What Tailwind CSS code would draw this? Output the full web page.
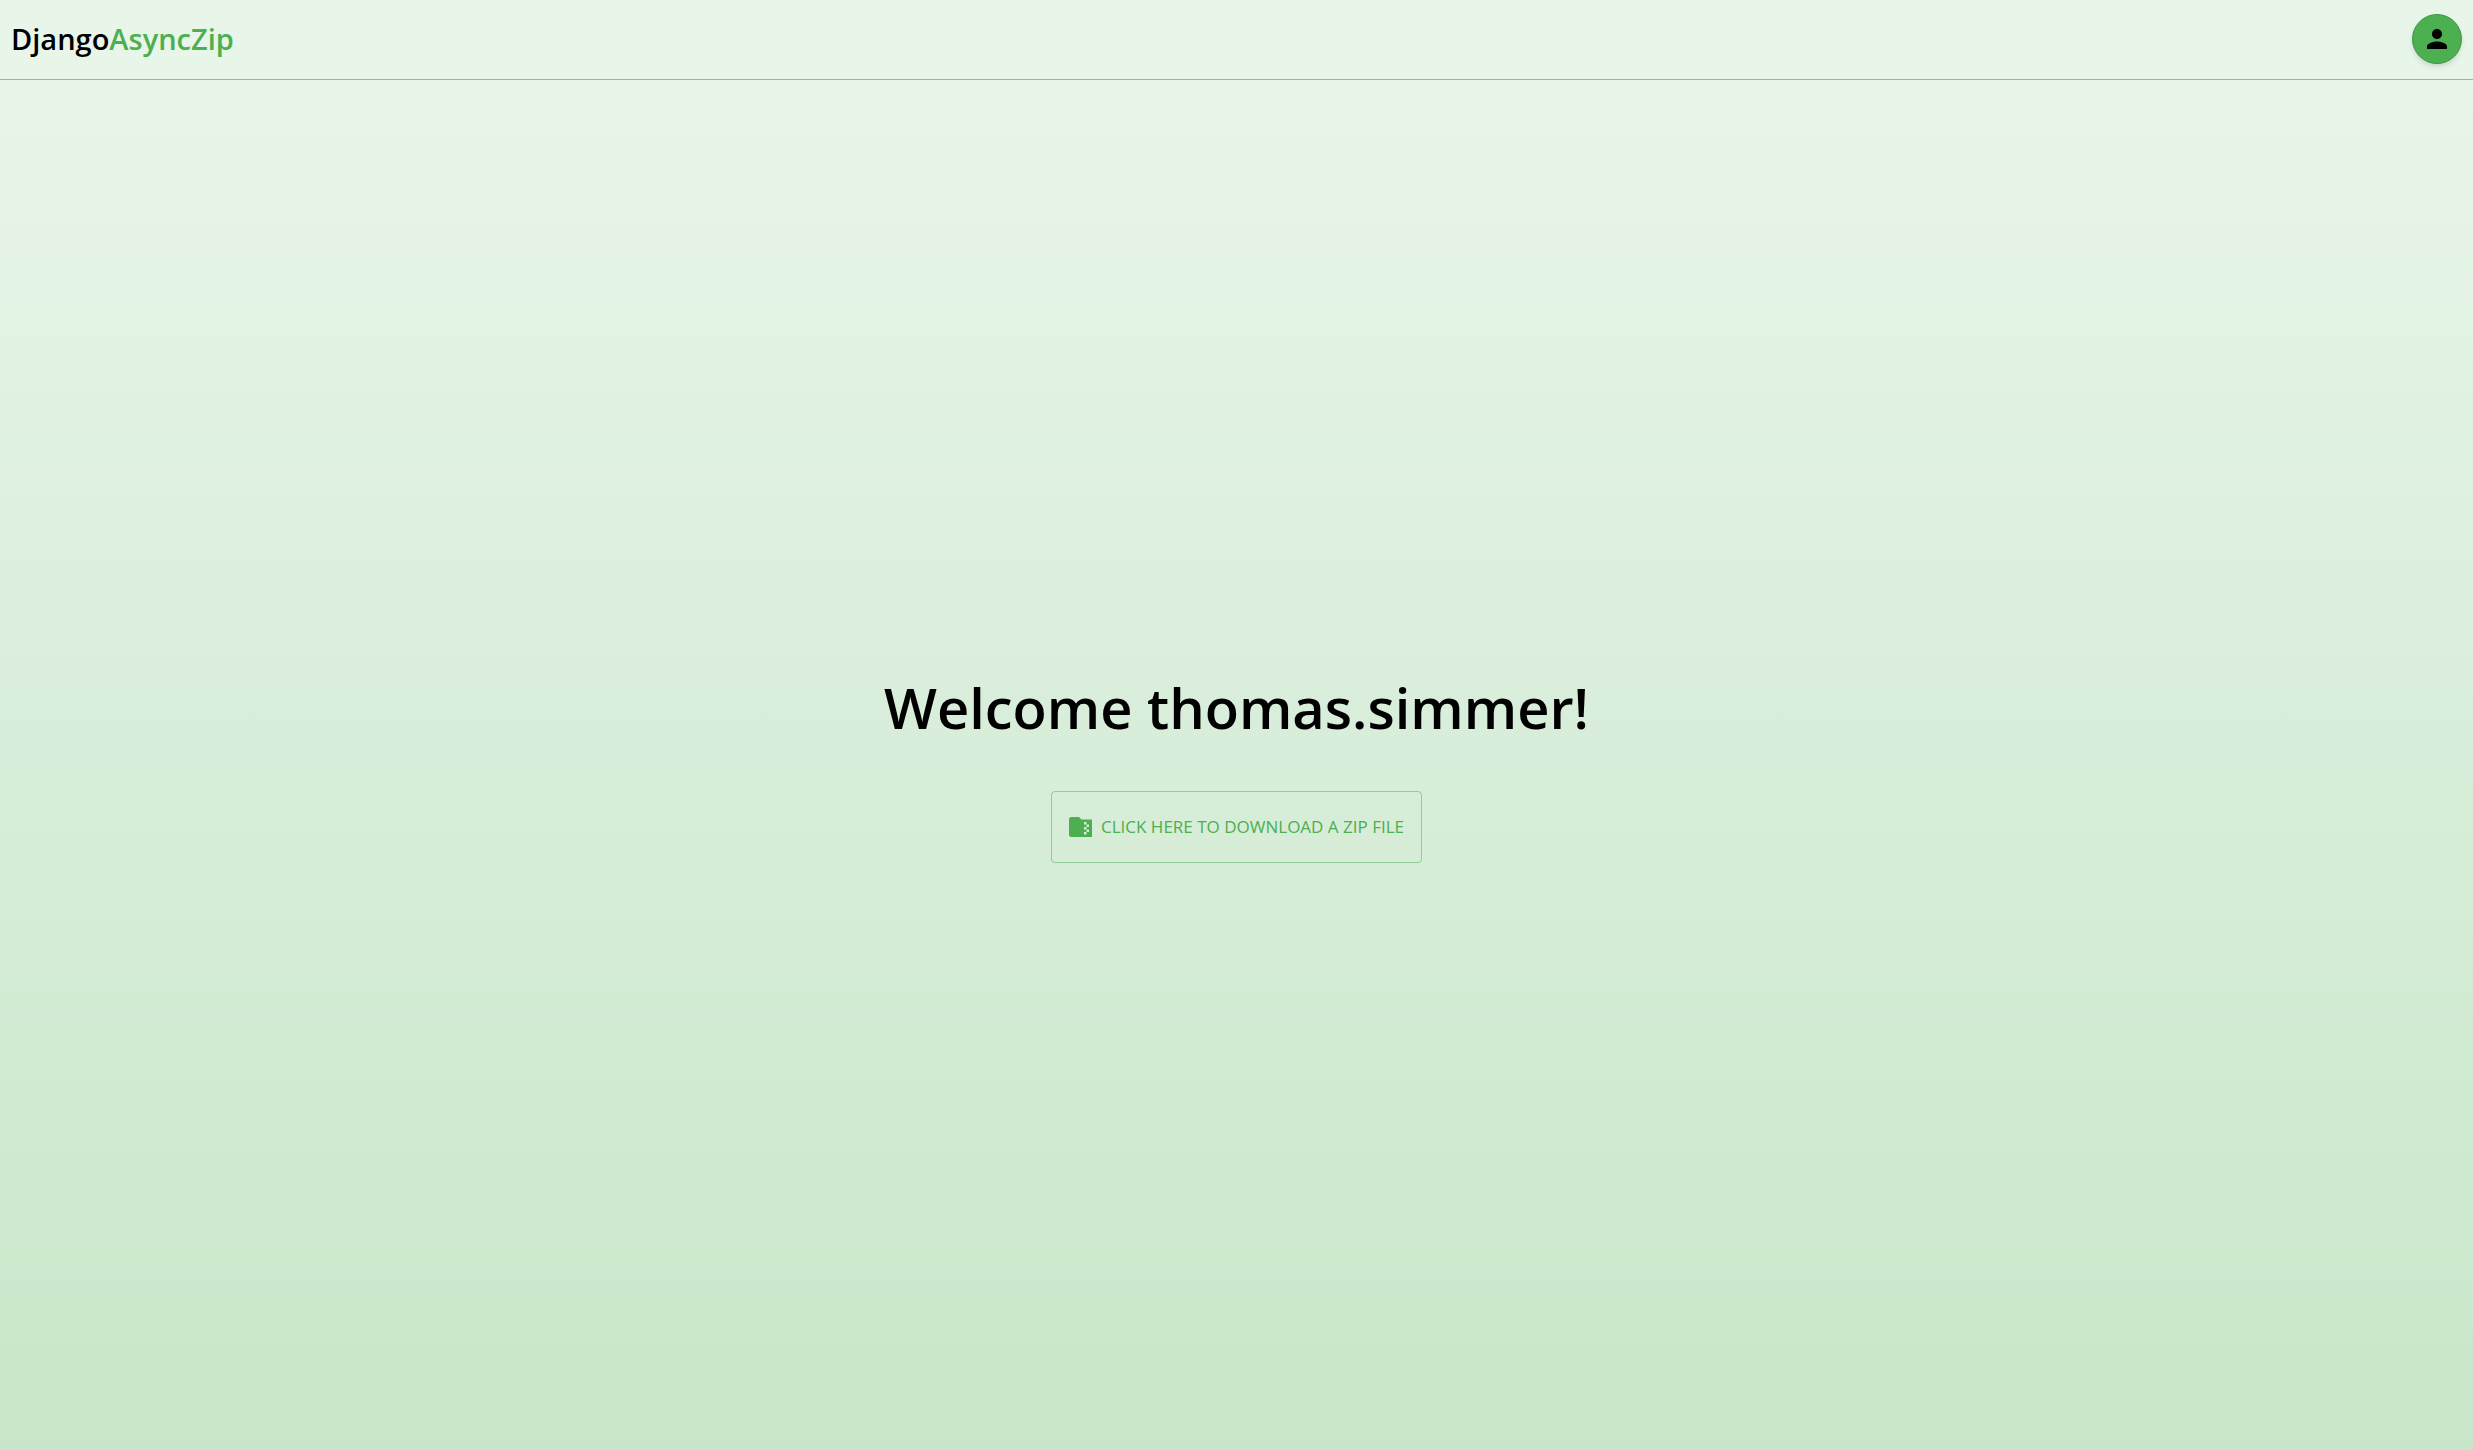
<!DOCTYPE html>
<html lang="en">
<head>
<meta charset="utf-8">
<title>DjangoAsyncZip</title>
<script src="https://cdn.jsdelivr.net/npm/@tailwindcss/browser@4"></script>
</head>
<body class="flex min-h-screen flex-col font-['Segoe_UI','Open_Sans',sans-serif] text-black">
<header class="flex h-20 items-center justify-between border-b border-[#81c784] bg-[#e8f5e9] px-[11px] pb-px">
<a href="#" class="text-[29px] font-semibold">Django<span class="text-[#4caf50]">AsyncZip</span></a>
<button type="button" aria-label="Account" class="flex size-[50px] items-center justify-center rounded-full border border-[#419644] bg-[#4caf50] shadow-md"><svg viewBox="0 0 24 24" class="size-[30px]" fill="currentColor"><path d="M12 12c2.210 0 4-1.790 4-4s-1.790-4-4-4-4 1.790-4 4 1.790 4 4 4zm0 2c-2.670 0-8 1.340-8 4v2h16v-2c0-2.660-5.330-4-8-4z"/></svg></button>
</header>
<main class="flex flex-1 flex-col items-center justify-center gap-11 bg-linear-to-b/srgb from-[#e8f5e9] to-[#c8e6c9]">
<h1 class="text-[56px] font-semibold leading-[80px]">Welcome thomas.simmer!</h1>
<button type="button" class="flex h-18 items-center gap-[9px] rounded border border-[#4caf50]/50 px-[17px] text-[17px] text-[#4caf50]"><svg viewBox="2 4 18.400 16" class="h-5 w-[23px] overflow-hidden" fill="currentColor"><path d="M20 6h-8l-2-2H4c-1.100 0-1.990.9-1.990 2L2 18c0 1.100.9 2 2 2h16c1.100 0 2-.9 2-2V8c0-1.100-.9-2-2-2zm-2 6h-2v2h2v2h-2v2h-2v-2h2v-2h-2v-2h2v-2h-2V8h2v2h2v2z"/></svg>CLICK HERE TO DOWNLOAD A ZIP FILE</button>
</main>
</body>
</html>
